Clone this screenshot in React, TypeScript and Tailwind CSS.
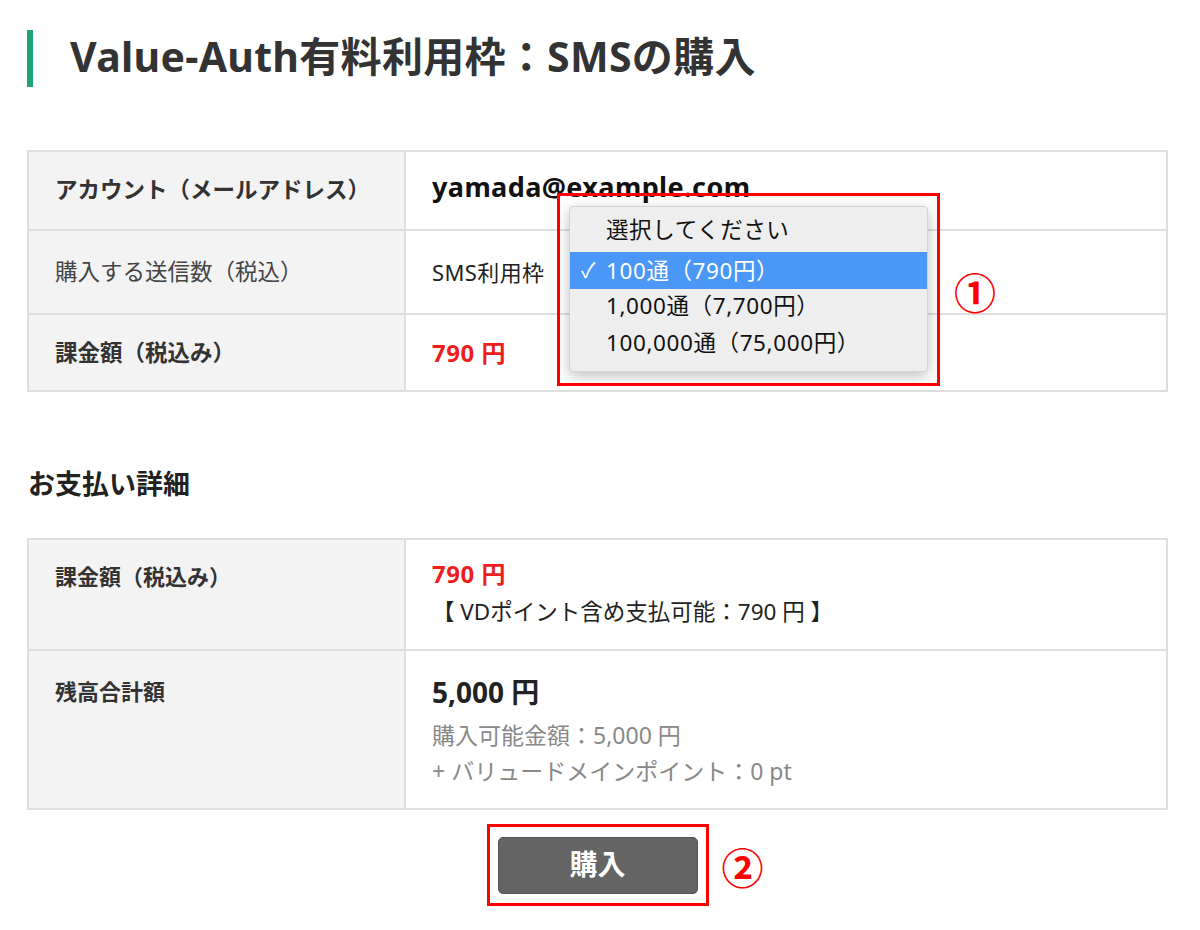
import React from "react";

const font = "font-['Noto_Sans','Noto_Sans_CJK_JP',sans-serif]";

const options = [
  { label: "選択してください", selected: false },
  { label: "100通（790円）", selected: true },
  { label: "1,000通（7,700円）", selected: false },
  { label: "100,000通（75,000円）", selected: false },
];

export default function App() {
  return (
    <div className={`${font} relative w-[1200px] h-[930px] bg-white text-[#333] px-[27px] pt-[30px]`}>
      {/* Page title */}
      <h1 className="flex items-center h-[57px] border-l-[6px] border-[#1fa37b] pl-[37px] pb-[4px] text-[41px] font-bold tracking-[0.3px] text-[#333]">
        Value-Auth有料利用枠：SMSの購入
      </h1>

      {/* Purchase table */}
      <div className="relative mt-[63px] w-[1141px]">
        <div className="grid grid-cols-[377px_1fr] border-2 border-[#dedede]">
          <div className="h-[77px] flex items-center pl-[26px] pb-[2px] bg-[#f3f3f3] border-r-2 border-[#dedede] text-[22.5px] font-bold">
            アカウント（メールアドレス）
          </div>
          <div className="h-[77px] flex items-center pl-[26px] pb-[6px] text-[27px] font-bold tracking-[0.4px] text-[#111]">
            yamada@example.com
          </div>
          <div className="h-[84px] flex items-center pl-[26px] bg-[#f3f3f3] border-r-2 border-t-2 border-[#dedede] text-[22.5px] text-[#444]">
            購入する送信数（税込）
          </div>
          <div className="h-[84px] flex items-center pl-[26px] border-t-2 border-[#dedede] text-[22px] tracking-[0.4px] text-[#222]">
            SMS利用枠
          </div>
          <div className="h-[77px] flex items-center pl-[26px] bg-[#f3f3f3] border-r-2 border-t-2 border-[#dedede] text-[22.5px] font-bold">
            課金額（税込み）
          </div>
          <div className="h-[77px] flex items-center pl-[26px] text-[24px] font-bold tracking-[0.5px] text-[#f01d1d] border-t-2 border-[#dedede]">
            790 円
          </div>
        </div>

        {/* Open select menu, highlighted */}
        <div className="absolute left-[530px] top-[43px] w-[383px] h-[193px] border-[3px] border-[#f00]">
          <div className="absolute left-[9px] top-[10px] w-[359px] h-[166px] rounded-[4px] bg-[#eeeeee] border border-[#d4d4d4] shadow-[0_4px_14px_rgba(0,0,0,0.25)] pt-[8px]">
            {options.map((o, i) => (
              <div
                key={o.label}
                className={`relative h-[37px] flex items-center pl-[36px] text-[22.5px] tracking-[0.6px] ${
                  o.selected ? "bg-[#4a97f7] text-white" : "text-[#111]"
                } ${i === 0 ? "pb-[8px]" : i > 1 ? "pb-[3px]" : ""}`}
              >
                {o.selected && <span className="absolute left-[11px] top-[3px] text-[21px]">✓</span>}
                {o.label}
              </div>
            ))}
          </div>
        </div>
        <div className="absolute left-[927px] top-[120px] text-[42px] leading-none font-bold text-[#f00] font-['Noto_Sans_CJK_JP',sans-serif]">
          ①
        </div>
      </div>

      {/* Payment details */}
      <h2 className="mt-[72px] text-[27px] font-bold text-[#222] pl-[1px] leading-[40px]">お支払い詳細</h2>

      <div className="mt-[34px] w-[1141px] grid grid-cols-[377px_1fr] border-2 border-[#dedede]">
        <div className="h-[109px] pl-[26px] pt-[20px] bg-[#f3f3f3] border-r-2 border-[#dedede] text-[22px] font-bold">
          課金額（税込み）
        </div>
        <div className="h-[109px] pl-[26px] pt-[18px] flex flex-col gap-[6px]">
          <span className="text-[24px] font-bold tracking-[0.5px] text-[#f01d1d] leading-[32px]">790 円</span>
          <span className="text-[22.5px] text-[#222] leading-[32px]">【 VDポイント含め支払可能：790 円 】</span>
        </div>
        <div className="h-[159px] pl-[26px] pt-[24px] bg-[#f3f3f3] border-r-2 border-t-2 border-[#dedede] text-[22px] font-bold">
          残高合計額
        </div>
        <div className="h-[159px] pl-[26px] pt-[22px] border-t-2 border-[#dedede] flex flex-col">
          <span className="text-[28px] font-bold text-[#222] leading-[38px]">5,000 円</span>
          <span className="mt-[6px] text-[23px] text-[#888] leading-[36px]">購入可能金額：5,000 円</span>
          <span className="text-[23px] text-[#888] leading-[36px]">+ バリュードメインポイント：0 pt</span>
        </div>
      </div>

      {/* Purchase button */}
      <div className="mt-[14px] flex justify-center w-[1141px]">
        <div className="relative w-[222px] h-[82px] border-[3px] border-[#f00] pl-[8px] pt-[10px]">
          <button className="w-[200px] h-[57px] rounded-[5px] bg-[#646464] border border-[#555] text-white text-[28px] font-bold pb-[3px]">
            購入
          </button>
          <div className="absolute left-[232px] top-[18px] text-[42px] leading-none font-bold text-[#f00] font-['Noto_Sans_CJK_JP',sans-serif]">
            ②
          </div>
        </div>
      </div>
    </div>
  );
}
